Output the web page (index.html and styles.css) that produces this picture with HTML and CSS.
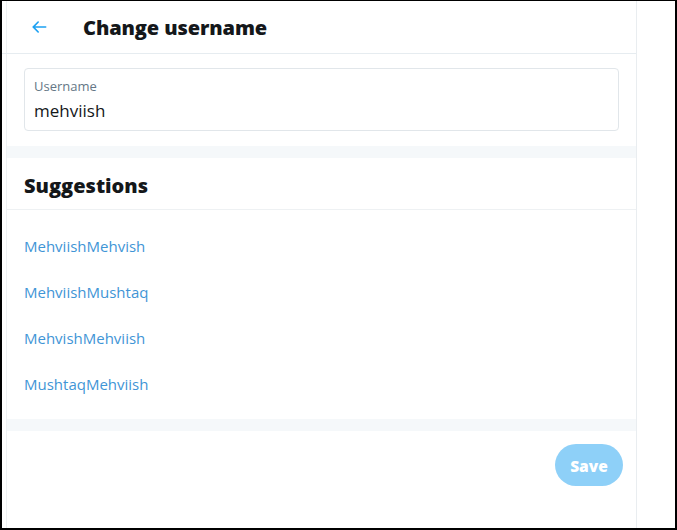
FILE: index.html
```html
<!DOCTYPE html>
<html lang="en">
<head>
<meta charset="utf-8">
<title>Change username</title>
<link rel="stylesheet" href="styles.css">
</head>
<body>
<div class="frame">
  <main class="column">
    <header class="topbar">
      <button class="back" aria-label="Back">
        <svg viewBox="0 0 24 24" width="20" height="20"><path d="M20 11H7.414l4.293-4.293a1 1 0 0 0-1.414-1.414l-6 6a1 1 0 0 0 0 1.414l6 6a1 1 0 0 0 1.414-1.414L7.414 13H20a1 1 0 1 0 0-2z" fill="#1da1f2"/></svg>
      </button>
      <h1 class="title">Change username</h1>
    </header>
    <section class="form">
      <label class="field">
        <span class="field-label">Username</span>
        <span class="field-value">mehviish</span>
      </label>
    </section>
    <div class="band"></div>
    <section class="suggestions">
      <h2 class="sugg-title">Suggestions</h2>
      <ul class="sugg-list">
        <li><a class="sugg-link">MehviishMehvish</a></li>
        <li><a class="sugg-link">MehviishMushtaq</a></li>
        <li><a class="sugg-link">MehvishMehviish</a></li>
        <li><a class="sugg-link">MushtaqMehviish</a></li>
      </ul>
    </section>
    <div class="band"></div>
    <footer class="actions">
      <button class="save" disabled>Save</button>
    </footer>
  </main>
</div>
</body>
</html>
```

FILE: styles.css
```css
* { box-sizing: border-box; }
html, body { margin: 0; padding: 0; background: #fff; }
body { font-family: "Open Sans", "Noto Sans", sans-serif; color: #14171a; }

.frame {
  width: 677px;
  height: 530px;
  border: 2px solid #000;
  border-top-width: 1px;
  background: #fff;
  overflow: hidden;
  display: flex;
}

.column {
  margin-left: 4px;
  width: 631px;
  height: 100%;
  border-left: 1px solid #eef1f3;
  border-right: 1px solid #e9edf0;
  display: flex;
  flex-direction: column;
}

.topbar {
  height: 53px;
  flex: none;
  display: flex;
  align-items: center;
  border-bottom: 1px solid #e6ecf0;
  margin-left: -5px;
  padding-left: 27px;
}
.back {
  border: 0;
  background: none;
  padding: 0;
  width: 20px;
  height: 20px;
  display: flex;
}
.title {
  margin: 0 0 0 34px;
  font-size: 20px;
  font-weight: 800;
  letter-spacing: -0.1px;
  color: #14171a;
}

.form {
  padding: 14px 17px 15px 17px;
}
.field {
  display: flex;
  flex-direction: column;
  height: 63px;
  border: 1px solid #e1e6ea;
  border-radius: 4px;
  padding: 8px 9px 0 9px;
}
.field-label {
  font-size: 13px;
  color: #657786;
  line-height: 18px;
}
.field-value {
  font-size: 17px;
  line-height: 26px;
  margin-top: 3px;
  color: #14171a;
}

.band {
  height: 12px;
  flex: none;
  background: #f5f8fa;
}

.suggestions {
  display: flex;
  flex-direction: column;
}
.sugg-title {
  margin: 0;
  height: 52px;
  display: flex;
  align-items: center;
  padding: 3px 17px 0;
  font-size: 20px;
  font-weight: 800;
  border-bottom: 1px solid #eef1f3;
  color: #14171a;
}
.sugg-list {
  list-style: none;
  margin: 0;
  padding: 13px 0 12px;
}
.sugg-list li {
  height: 46px;
  display: flex;
  align-items: center;
  padding: 0 17px;
}
.sugg-link {
  font-size: 15px;
  color: #3f95d6;
}

.actions {
  display: flex;
  justify-content: flex-end;
  padding: 13px 13px 0 0;
}
.save {
  width: 68px;
  height: 42px;
  padding: 2px 0 0;
  border: 0;
  border-radius: 21px;
  background: #8ed0f8;
  color: #fff;
  font-family: "Open Sans", "Noto Sans", sans-serif;
  font-size: 15.5px;
  font-weight: 800;
}
```
